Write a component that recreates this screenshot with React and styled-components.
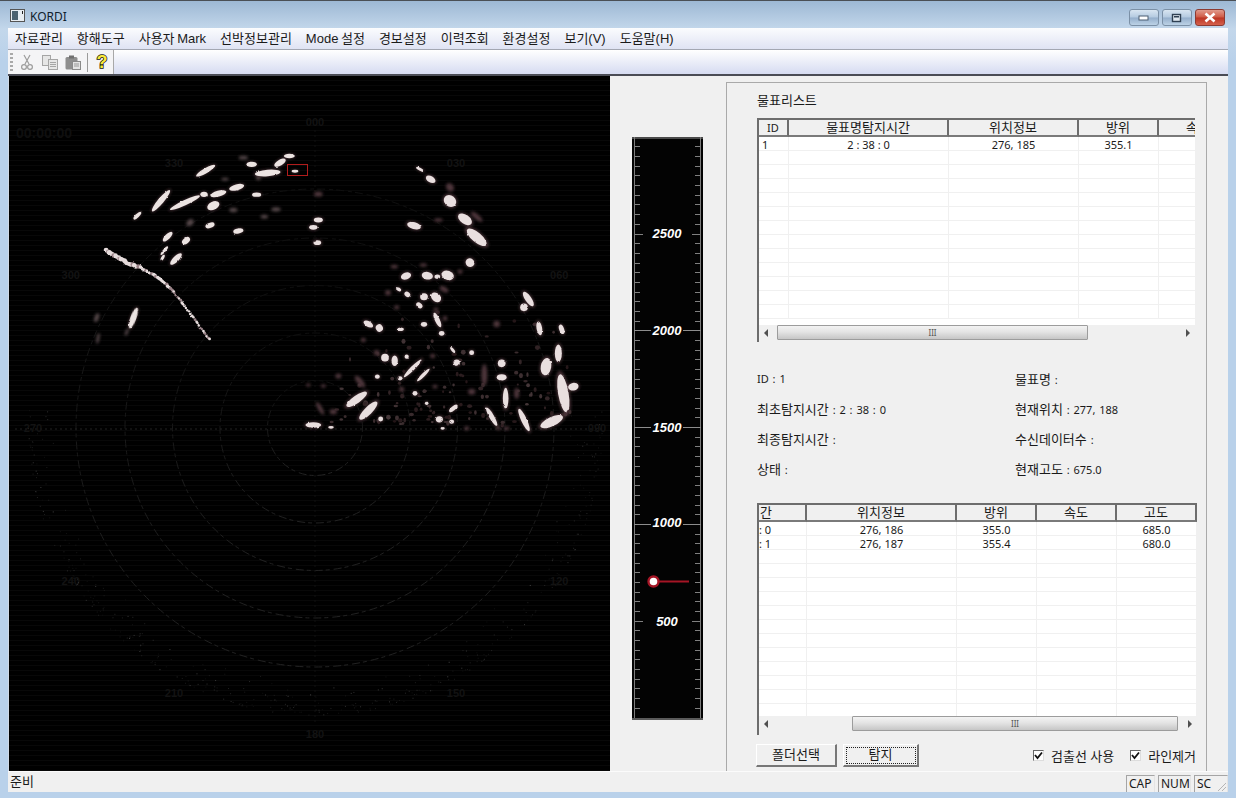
import React from 'react';
import styled, {createGlobalStyle, css} from 'styled-components';

const FONT = '"Noto Sans", "Noto Sans CJK KR", sans-serif';
const MENU_FONT = '"Liberation Sans", "Noto Sans CJK KR", sans-serif';

const Global = createGlobalStyle`
    html, body { margin: 0; padding: 0; overflow: hidden; background: #b9d1ea; }
    * { box-sizing: border-box; }
`;

const Win = styled.div`
    width: 1236px;
    height: 798px;
    display: flex;
    flex-direction: column;
    padding: 0 8px 6px 8px;
    background: linear-gradient(180deg, #9db8d4 0, #c3d7eb 28px, #b9d1ea 60px, #b9d1ea 100%);
    border-top: 1px solid #4a4f55;
    font-family: ${FONT};
    font-size: 13px;
    color: #1a1a1a;
`;

const TitleBar = styled.div`
    height: 27px;
    display: flex;
    align-items: center;
    gap: 5px;
    padding: 4px 3px 0 2px;
    font-size: 12px;
`;

const TitleText = styled.span`
    flex: 1;
    color: #10202c;
`;

const WinBtn = styled.div`
    width: 30px;
    height: 17px;
    margin-left: -2px;
    margin-top: 2px;
    display: flex;
    align-items: center;
    justify-content: center;
    border: 1px solid #7b90a6;
    border-radius: 3px;
    background: linear-gradient(180deg, #d8e5f1 0, #b4cae0 48%, #94aecb 52%, #bcd2e6 100%);
    ${p => p.$close && css`
        border-color: #8d3b32;
        background: linear-gradient(180deg, #e09a8c 0, #cf5a45 48%, #bb3524 52%, #d5614c 100%);
    `}
`;

const MenuBar = styled.div`
    height: 22px;
    display: flex;
    align-items: center;
    padding: 1px 0 0 1px;
    font-family: ${MENU_FONT};
    word-spacing: -1px;
    background: linear-gradient(180deg, #fbfcfe 0, #dfe3f3 100%);
    border-bottom: 1px solid #a3a7b2;
`;

const MenuItem = styled.span`
    padding: 0 6px;
    margin-right: 2px;
    white-space: nowrap;
    line-height: 20px;
`;

const ToolBar = styled.div`
    height: 26px;
    display: flex;
    background: linear-gradient(180deg, #ffffff 0, #d6dbf1 100%);
    border-bottom: 2px solid #4a4c55;
`;

const ToolGroup = styled.div`
    width: 106px;
    height: 24px;
    display: flex;
    align-items: center;
    background: #f4f4f6;
    border-right: 1px solid #a8a8a8;
`;

const Gripper = styled.div`
    width: 3px;
    height: 18px;
    margin: 0 3px 0 2px;
    background: repeating-linear-gradient(180deg, #a9a9a9 0, #a9a9a9 2px, transparent 2px, transparent 4px);
`;

const ToolIcon = styled.div`
    width: 23px;
    display: flex;
    justify-content: center;
`;

const ToolSep = styled.div`
    width: 1px;
    height: 19px;
    margin: 0 2px 0 3px;
    background: #9a9a9a;
`;

const Main = styled.div`
    flex: 1;
    min-height: 0;
    display: flex;
    background: #f0f0f0;
`;

const RadarBox = styled.div`
    width: 602px;
    border-left: 1px solid #cfd8e4;
    background: repeating-linear-gradient(180deg, #000 0, #000 4px, #080808 4px, #080808 5px);
    line-height: 0;
`;

const GaugeCol = styled.div`
    width: 116px;
    padding: 61px 0 0 22px;
    line-height: 0;
`;

const Panel = styled.div`
    width: 481px;
    margin-top: 6px;
    padding: 9px 0 0 30px;
    border: 1px solid #a9a9a9;
    border-bottom: none;
    background: #f0f0f0;
`;

const PanelTitle = styled.div`
    height: 26px;
    line-height: 17px;
`;

const ListFrame = styled.div`
    width: ${p => p.$w}px;
    height: ${p => p.$h}px;
    display: flex;
    flex-direction: column;
    overflow: hidden;
    border-left: 2px solid #6d6d6d;
    border-top: 2px solid #6d6d6d;
    background: #fff;
`;

const HeaderRow = styled.div`
    display: flex;
    flex: none;
    height: 17px;
`;

const HeaderCell = styled.div`
    flex: none;
    width: ${p => p.$w}px;
    height: 17px;
    line-height: 15px;
    padding-left: ${p => p.$left ? 1 : 0}px;
    text-align: ${p => p.$left ? 'left' : 'center'};
    font-size: ${p => p.$small ? 11 : 13}px;
    background: #f0f0f0;
    border-right: 2px solid #6d6d6d;
    border-bottom: 2px solid #7a7a7a;
    white-space: nowrap;
`;

const ListBody = styled.div`
    flex: 1;
    min-height: 0;
    overflow: hidden;
`;

const Row = styled.div`
    display: flex;
    height: 14px;
    border-bottom: 1px solid #f0f0f0;
`;

const Cell = styled.div`
    flex: none;
    width: ${p => p.$w}px;
    height: 13px;
    font-size: 11px;
    line-height: 15px;
    padding-left: ${p => p.$left ? p.$pad : 0}px;
    text-align: ${p => p.$left ? 'left' : 'center'};
    border-right: 1px solid #f0f0f0;
    white-space: nowrap;
`;

const Scroll = styled.div`
    flex: none;
    height: ${p => 15 + p.$under}px;
    display: flex;
    align-items: flex-start;
    padding-bottom: ${p => p.$under}px;
    background: #f0f0f0;
`;

const Arrow = styled.div`
    flex: none;
    width: 0;
    height: 0;
    margin: 4px 5px 0;
    border-top: 4px solid transparent;
    border-bottom: 4px solid transparent;
    ${p => p.$right
        ? css`border-left: 4px solid #505050;`
        : css`border-right: 4px solid #505050;`}
`;

const Track = styled.div`
    flex: 1;
    height: 15px;
`;

const Thumb = styled.div`
    width: ${p => p.$w}px;
    height: 15px;
    margin-left: ${p => p.$x}px;
    display: flex;
    align-items: center;
    justify-content: center;
    border: 1px solid #9c9c9c;
    border-radius: 1px;
    background: linear-gradient(180deg, #f3f3f3 0, #e4e4e4 45%, #c6c6c6 100%);
    font-size: 8px;
    color: #555;
`;

const InfoGrid = styled.div`
    display: grid;
    grid-template-columns: 258px 1fr;
    grid-auto-rows: 30px;
    width: 440px;
    margin-top: 27px;
    height: 134px;
    line-height: 20px;
`;

const InfoText = styled.div`
    white-space: nowrap;
    font-size: 11px;
    word-spacing: 1px;
`;

const Hangul = styled.span`
    font-size: 13px;
    word-spacing: 0;
`;

const Footer = styled.div`
    display: flex;
    align-items: center;
    width: 440px;
    margin-top: 9px;
`;

const PushBtn = styled.div`
    width: ${p => p.$w}px;
    height: 23px;
    margin-left: ${p => p.$first ? -1 : 6}px;
    display: flex;
    align-items: center;
    justify-content: center;
    padding-bottom: 3px;
    background: #f0f0f0;
    border-top: 1px solid #fff;
    border-left: 1px solid #fff;
    border-right: 2px solid #777;
    border-bottom: 2px solid #777;
    ${p => p.$focus && css`
        outline: 1px dotted #222;
        outline-offset: -4px;
    `}
`;

const CheckWrap = styled.label`
    display: flex;
    align-items: center;
    gap: 7px;
    margin-left: ${p => p.$first ? 114 : 16}px;
    white-space: nowrap;
`;

const CheckBox = styled.span`
    width: 11px;
    height: 11px;
    display: flex;
    align-items: center;
    justify-content: center;
    background: #fff;
    border-top: 1px solid #666;
    border-left: 1px solid #666;
    border-right: 1px solid #ddd;
    border-bottom: 1px solid #ddd;
`;

const StatusBar = styled.div`
    height: 21px;
    display: flex;
    align-items: flex-end;
    gap: 3px;
    padding-left: 2px;
    background: #f0f0f0;
    border-top: 1px solid #fbfbfb;
`;

const StatusText = styled.div`
    flex: 1;
    height: 20px;
    line-height: 19px;
`;

const Pane = styled.div`
    width: ${p => p.$w}px;
    height: 17px;
    line-height: 16px;
    padding-left: 2px;
    display: flex;
    justify-content: space-between;
    align-items: flex-end;
    font-size: 12px;
    border-top: 1px solid #a5a5a5;
    border-left: 1px solid #a5a5a5;
    border-right: 1px solid #e4e4e4;
    white-space: nowrap;
`;

/* --- radar picture data, taken from crops (zx, zy, length, width, angle) --- */
const bright1 = [
    [617,272,60,14,-30],[483,362,75,16,-50],[555,368,90,14,-25],[612,343,20,14,0],[655,341,45,16,-15],
    [710,322,42,16,-15],[640,377,35,22,-25],[803,279,70,18,-5],[840,248,35,16,-30],[868,228,30,12,0],
    [755,253,28,14,0],[770,344,25,12,0],[715,453,28,14,-10],[630,436,26,14,-20],[503,470,35,14,-45],
    [558,482,25,16,-40],[412,407,28,10,-45],[493,512,30,8,-50],[488,533,18,8,-60],[528,537,42,16,-45],
    [400,714,60,16,-70],[885,274,18,8,0],
];
const dim1 = [
    [730,233,25,10,0],[828,388,25,12,0],[700,390,22,12,0],[793,410,20,10,0],[570,428,22,16,-40],
    [290,713,25,12,-70],[294,775,30,8,-80],[380,757,20,8,-70],[775,295,14,10,0],[675,298,20,8,0],
];
const arc = [
    [320,512],[350,530],[380,548],[420,562],[460,585],[490,605],[520,635],[550,672],[580,712],[610,755],[630,780],
];
const bright2 = [
    [360,208,25,8,30],[392,238,30,18,30],[450,303,38,32,40],[495,358,45,26,35],[530,412,70,28,40],
    [342,377,40,20,15],[510,488,26,24,40],[318,528,30,20,-20],[382,527,32,22,10],[443,526,36,26,20],
    [412,530,16,12,0],[408,592,32,24,40],[372,590,22,20,0],[322,583,18,14,40],[296,568,16,10,30],
    [358,616,20,14,40],[205,672,30,16,30],[238,684,22,20,60],[302,688,18,10,0],[372,673,18,14,0],
    [412,660,45,14,65],[425,700,16,14,0],[458,750,20,8,50],[470,788,18,18,0],[515,758,14,14,0],
    [255,773,22,22,0],[284,782,18,30,0],[320,770,12,12,0],[338,805,70,12,-45],[370,825,50,10,-45],
    [300,835,14,12,0],[232,830,14,12,0],[345,880,14,14,0],[170,898,70,22,-35],[205,932,70,22,-45],
    [242,957,14,14,0],[380,910,10,10,0],[40,975,45,16,0],[93,982,16,8,0],[460,925,30,12,-40],
    [418,958,20,18,0],[455,965,14,12,0],[428,985,12,8,0],[575,950,60,14,60],[617,895,60,16,90],
    [605,790,22,22,0],[605,832,28,18,0],[672,960,70,16,65],[755,965,70,26,-25],[790,880,110,30,80],
    [820,860,30,22,-10],[775,760,50,20,90],[738,800,50,30,-80],[718,685,40,16,80],[785,688,28,14,70],
    [672,622,22,22,0],[685,597,48,18,55],[55,360,26,14,0],[40,382,24,14,0],[52,428,22,14,0],
];
const dim2 = [
    [450,262,25,20,50],[590,672,18,18,0],[553,825,60,16,90],[515,875,20,16,0],[180,845,40,16,50],
    [115,828,16,14,0],[60,925,40,12,60],[100,935,20,14,0],[55,282,24,14,0],[650,880,30,14,90],
    [432,568,26,14,30],[283,500,20,10,0],[370,495,20,10,0],[480,515,14,12,0],[264,578,16,14,0],
    [290,622,14,12,0],[408,628,14,10,0],[435,655,12,14,0],[25,855,12,10,0],[70,858,14,10,0],
    [190,720,14,12,0],[230,758,16,14,0],[398,768,14,12,0],[405,860,14,10,0],[305,868,14,14,0],
    [500,985,14,12,0],[620,985,16,10,0],[595,985,14,10,0],[530,350,40,14,40],[415,360,24,10,0],
];

const CX = 315;
const CY = 428;

// small seeded random so the speckle stays the same every load
function makeRand(seed) {
    let s = seed;
    return () => {
        s = (s * 16807) % 2147483647;
        return s / 2147483647;
    };
}

function blob(item, ox, oy, key, fill, grow = 1) {
    const [zx, zy, l, w, a] = item;
    const x = ox + zx / 3;
    const y = oy + zy / 3;
    return <ellipse key={key} cx={x} cy={y} rx={l / 6 * grow} ry={w / 6 * grow} fill={fill} transform={`rotate(${a} ${x} ${y})`} />;
}

function arcDots() {
    const rand = makeRand(99);
    const out = [];
    for (let i = 0; i < arc.length - 1; i++) {
        const [ax, ay] = arc[i];
        const [bx, by] = arc[i + 1];
        const n = 7;
        for (let j = 0; j < n; j++) {
            const t = j / n;
            const x = (ax + (bx - ax) * t) / 3 + (rand() - 0.5) * 1.2;
            const y = 80 + (ay + (by - ay) * t) / 3 + (rand() - 0.5) * 1.2;
            const r = (i < 3 ? 2.1 : i < 6 ? 1.5 : 1.15) + rand() * 0.35;
            out.push(<circle key={`${i}-${j}`} cx={x} cy={y} r={r} fill={rand() > 0.25 ? '#e6dcdc' : '#9a8388'} />);
        }
    }
    return out;
}

function speckle() {
    const rand = makeRand(4711);
    const out = [];
    for (let i = 0; i < 420; i++) {
        const ang = Math.PI * (-0.02 + rand() * 1.04);
        const r = 287 - rand() * rand() * 34;
        const x = CX + Math.cos(ang) * r;
        const y = CY + Math.sin(ang) * r;
        const v = 14 + Math.floor(rand() * rand() * 60);
        out.push(<rect key={i} x={x} y={y} width={1} height={1} fill={`rgb(${v},${v},${v})`} />);
    }
    return out;
}

// the faint returns between the bright ones in the right hand sector
function haze() {
    const rand = makeRand(1234);
    const out = [];
    for (let i = 0; i < 150; i++) {
        const x = 285 + rand() * 285;
        const y = 425 - rand() * rand() * 125;
        if (x < 330 + (425 - y) * 0.2) continue;
        const v = 26 + Math.floor(rand() * 36);
        out.push(<ellipse key={i} cx={x} cy={y} rx={1 + rand() * 1.6} ry={1 + rand() * 1.6} fill={`rgb(${v + 8},${v - 6},${v - 4})`} />);
    }
    return out;
}

function Radar() {
    const rings = [47.5, 95, 142.5, 190, 239];
    const labels = ['000', '030', '060', '090', '120', '150', '180', '210', '240', '270', '300', '330'];
    return (
        <svg width="601" height="695" viewBox="9 76 601 695">
            <defs>
                <filter id="rough" x="-10%" y="-10%" width="120%" height="120%">
                    <feTurbulence type="fractalNoise" baseFrequency="0.3" numOctaves="2" seed="5" result="n" />
                    <feDisplacementMap in="SourceGraphic" in2="n" scale="2" xChannelSelector="R" yChannelSelector="G" />
                    <feGaussianBlur stdDeviation="0.75" />
                </filter>
                <filter id="halo" x="-10%" y="-10%" width="120%" height="120%">
                    <feGaussianBlur stdDeviation="1.5" />
                </filter>
                <linearGradient id="ringFade" x1="0" y1="0" x2="0" y2="1">
                    <stop offset="0" stopColor="#0f0f0f" />
                    <stop offset="0.5" stopColor="#181818" />
                    <stop offset="1" stopColor="#222" />
                </linearGradient>
            </defs>
            {rings.map(r => (
                <circle key={r} cx={CX} cy={CY} r={r} fill="none" stroke="url(#ringFade)" strokeWidth="1" strokeDasharray="4 3 8 4" />
            ))}
            <line x1="15" y1={CY + 1} x2="602" y2={CY + 1} stroke="#232323" strokeDasharray="2 3" />
            <line x1={CX} y1="130" x2={CX} y2="725" stroke="#101010" strokeDasharray="2 3" />
            {labels.map((t, i) => {
                const a = (i * 30 - 90) * Math.PI / 180;
                return (
                    <text key={t} x={CX + Math.cos(a) * 282} y={CY + Math.sin(a) * 306 + 4} textAnchor="middle"
                        fontFamily="Liberation Sans, sans-serif" fontSize="11" fontWeight="bold" fill="#131313">{t}</text>
                );
            })}
            <text x="16" y="138" fontFamily="Liberation Sans, sans-serif" fontSize="14" fontWeight="bold" fill="#0f0f0f">00:00:00</text>
            {speckle()}
            {haze()}
            <g filter="url(#halo)">
                {dim1.map((b, i) => blob(b, 0, 80, `d1${i}`, '#544649', 1.1))}
                {dim2.map((b, i) => blob(b, 300, 100, `d2${i}`, '#4d353a', 1.1))}
                {bright1.map((b, i) => blob(b, 0, 80, `h1${i}`, '#4a3337', 1.2))}
                {bright2.map((b, i) => blob(b, 300, 100, `h2${i}`, '#4a3337', 1.25))}
            </g>
            <g filter="url(#rough)">
                {bright1.map((b, i) => blob(b, 0, 80, `b1${i}`, '#ece4e2', 1.1))}
                {bright2.map((b, i) => blob(b, 300, 100, `b2${i}`, '#e9dfdf', 1.05))}
                {arcDots()}
            </g>
            <rect x="287.5" y="164.5" width="20" height="11" fill="none" stroke="#b01c1c" />
        </svg>
    );
}

function Gauge() {
    const top = 137;
    const pxPer50 = 9.68;
    const bottom = 717.5;
    const ticks = [];
    for (let i = 1; i < 60; i++) {
        const v = i * 50;
        const y = Math.round(bottom - i * pxPer50) + 0.5;
        const major = v % 500 === 0;
        const full = v === 1000 || v === 1500 || v === 2000;
        if (full) {
            ticks.push(<line key={v} x1="634" x2="701" y1={y} y2={y} stroke="#8d8d8d" />);
        } else {
            ticks.push(<line key={`l${v}`} x1="635" x2={major ? 643 : 640} y1={y} y2={y} stroke="#808080" />);
            ticks.push(<line key={`r${v}`} x1={major ? 692 : 695} x2="700" y1={y} y2={y} stroke="#808080" />);
        }
    }
    const labels = [[2500, 234], [2000, 331], [1500, 428], [1000, 523], [500, 622]];
    return (
        <svg width="72" height="584" viewBox={`632 ${top} 72 584`}>
            <rect x="632" y={top} width="71" height="583" fill="#030303" />
            <rect x="632" y={top} width="71" height="2" fill="#4a4a4a" />
            <rect x="632" y="718" width="71" height="2" fill="#5a5a5a" />
            <line x1="634.5" x2="634.5" y1={top} y2="718" stroke="#7c7c7c" />
            <line x1="700.5" x2="700.5" y1={top} y2="718" stroke="#7c7c7c" />
            {ticks}
            {labels.map(([v, y]) => (
                <g key={v}>
                    <rect x="651" y={y - 5} width="32" height="10" fill="#030303" />
                    <text x="667" y={y + 4} textAnchor="middle" fill="#fff" fontSize="13" fontWeight="bold"
                        fontStyle="italic" fontFamily="Liberation Sans, sans-serif">{v}</text>
                </g>
            ))}
            <line x1="654" x2="689" y1="581.5" y2="581.5" stroke="#a51525" strokeWidth="2" />
            <circle cx="653.5" cy="581.5" r="5" fill="#fff" stroke="#a51525" strokeWidth="2.4" />
        </svg>
    );
}

function ListView({w, h, cols, rows, rowCount, thumbX, thumbW, leftPad, under}) {
    return (
        <ListFrame $w={w} $h={h}>
            <HeaderRow>
                {cols.map((c, i) => (
                    <HeaderCell key={i} $w={c.w} $left={c.left} $small={c.small}>{c.label}</HeaderCell>
                ))}
            </HeaderRow>
            <ListBody>
                {Array.from({length: rowCount}).map((_, r) => (
                    <Row key={r}>
                        {cols.map((c, i) => (
                            <Cell key={i} $w={c.w} $left={i === 0} $pad={leftPad}>{rows[r] ? rows[r][i] : ''}</Cell>
                        ))}
                    </Row>
                ))}
            </ListBody>
            <Scroll $under={under}>
                <Arrow />
                <Track>
                    <Thumb $x={thumbX} $w={thumbW}>III</Thumb>
                </Track>
                <Arrow $right />
            </Scroll>
        </ListFrame>
    );
}

const menus = ['자료관리', '항해도구', '사용자 Mark', '선박정보관리', 'Mode 설정', '경보설정', '이력조회', '환경설정', '보기(V)', '도움말(H)'];

const topCols = [
    {label: 'ID', w: 30, small: true}, {label: '물표명탐지시간', w: 160}, {label: '위치정보', w: 130}, {label: '방위', w: 80}, {label: '속도', w: 80},
];
const bottomCols = [
    {label: '간', w: 48, left: true}, {label: '위치정보', w: 150}, {label: '방위', w: 80}, {label: '속도', w: 80}, {label: '고도', w: 80},
];

function Check() {
    return (
        <CheckBox>
            <svg width="9" height="9" viewBox="0 0 9 9">
                <path d="M1 4 L3.5 7 L8 1.5" fill="none" stroke="#111" strokeWidth="1.8" />
            </svg>
        </CheckBox>
    );
}

export default function App() {
    return (
        <Win>
            <Global />
            <TitleBar>
                <svg width="15" height="13" viewBox="0 0 15 13" style={{marginTop: -2}}>
                    <rect x="0.5" y="0.5" width="14" height="12" fill="#e8edf2" stroke="#555" />
                    <rect x="2" y="2" width="6" height="9" fill="#4c6270" />
                    <rect x="12" y="2" width="1" height="3" fill="#222" />
                </svg>
                <TitleText>KORDI</TitleText>
                <WinBtn>
                    <svg width="12" height="6"><rect x="1" y="1" width="9" height="4" fill="#fff" stroke="#4d5f72" /></svg>
                </WinBtn>
                <WinBtn>
                    <svg width="12" height="10"><rect x="1.5" y="1.5" width="8" height="7" fill="#dfe8f1" stroke="#2f4053" strokeWidth="1.4" /><rect x="3" y="3" width="5" height="1.5" fill="#2f4053" /></svg>
                </WinBtn>
                <WinBtn $close>
                    <svg width="14" height="11"><path d="M2.5 1.5 L11.5 9.5 M11.5 1.5 L2.5 9.5" stroke="#fff" strokeWidth="2.6" /></svg>
                </WinBtn>
            </TitleBar>
            <MenuBar>
                {menus.map(m => <MenuItem key={m}>{m}</MenuItem>)}
            </MenuBar>
            <ToolBar>
                <ToolGroup>
                    <Gripper />
                    <ToolIcon>
                        <svg width="12" height="17" viewBox="0 0 12 17" fill="none" stroke="#9c9c9c" strokeWidth="1.2">
                            <path d="M3 1 L8 10 M9 1 L4 10" />
                            <circle cx="3" cy="13" r="2.4" />
                            <circle cx="9" cy="13" r="2.4" />
                        </svg>
                    </ToolIcon>
                    <ToolIcon>
                        <svg width="16" height="15" viewBox="0 0 16 15" fill="#e6e6e6" stroke="#a5a5a5">
                            <rect x="0.5" y="0.5" width="8" height="10" />
                            <rect x="6.5" y="4.5" width="9" height="10" />
                            <path d="M8 7.5 H14 M8 9.5 H14 M8 11.5 H14" />
                        </svg>
                    </ToolIcon>
                    <ToolIcon>
                        <svg width="16" height="15" viewBox="0 0 16 15">
                            <rect x="0.5" y="2" width="12" height="12.5" rx="1.5" fill="#8e8e8e" />
                            <rect x="4" y="0.5" width="5" height="3" fill="#6f6f6f" />
                            <rect x="7.5" y="6.5" width="8" height="8" fill="#e4e4e4" stroke="#8a8a8a" />
                            <path d="M9 9 H14 M9 11 H14" stroke="#999" />
                        </svg>
                    </ToolIcon>
                    <ToolSep />
                    <ToolIcon>
                        <svg width="14" height="18" viewBox="0 0 14 18">
                            <text x="7" y="15" textAnchor="middle" fontFamily="Liberation Sans, sans-serif" fontSize="18" fontWeight="bold"
                                fill="#f9ea3c" stroke="#111" strokeWidth="1.5" paintOrder="stroke">?</text>
                        </svg>
                    </ToolIcon>
                </ToolGroup>
            </ToolBar>
            <Main>
                <RadarBox><Radar /></RadarBox>
                <GaugeCol><Gauge /></GaugeCol>
                <Panel>
                    <PanelTitle>물표리스트</PanelTitle>
                    <ListView w={438} h={224} cols={topCols} rowCount={13} leftPad={3} under={2}
                        rows={[['1', '2 : 38 : 0', '276, 185', '355.1', '']]} thumbX={4} thumbW={311} />
                    <InfoGrid>
                        <InfoText>ID : 1</InfoText>
                        <InfoText><Hangul>물표명</Hangul> :</InfoText>
                        <InfoText><Hangul>최초탐지시간</Hangul> : 2 : 38 : 0</InfoText>
                        <InfoText><Hangul>현재위치</Hangul> : 277, 188</InfoText>
                        <InfoText><Hangul>최종탐지시간</Hangul> :</InfoText>
                        <InfoText><Hangul>수신데이터수</Hangul> :</InfoText>
                        <InfoText><Hangul>상태</Hangul> :</InfoText>
                        <InfoText><Hangul>현재고도</Hangul> : 675.0</InfoText>
                    </InfoGrid>
                    <ListView w={440} h={232} cols={bottomCols} rowCount={14} leftPad={0} under={4}
                        rows={[[': 0', '276, 186', '355.0', '', '685.0'], [': 1', '276, 187', '355.4', '', '680.0']]} thumbX={79} thumbW={326} />
                    <Footer>
                        <PushBtn $first $w={81}>폴더선택</PushBtn>
                        <PushBtn $w={76} $focus>탐지</PushBtn>
                        <CheckWrap $first><Check />검출선 사용</CheckWrap>
                        <CheckWrap><Check />라인제거</CheckWrap>
                    </Footer>
                </Panel>
            </Main>
            <StatusBar>
                <StatusText>준비</StatusText>
                <Pane $w={29}>CAP</Pane>
                <Pane $w={33}>NUM</Pane>
                <Pane $w={34}>
                    SC
                    <svg width="12" height="12" viewBox="0 0 12 12" stroke="#b5b5b5">
                        <path d="M11 3 L3 11 M11 7 L7 11" />
                    </svg>
                </Pane>
            </StatusBar>
        </Win>
    );
}
